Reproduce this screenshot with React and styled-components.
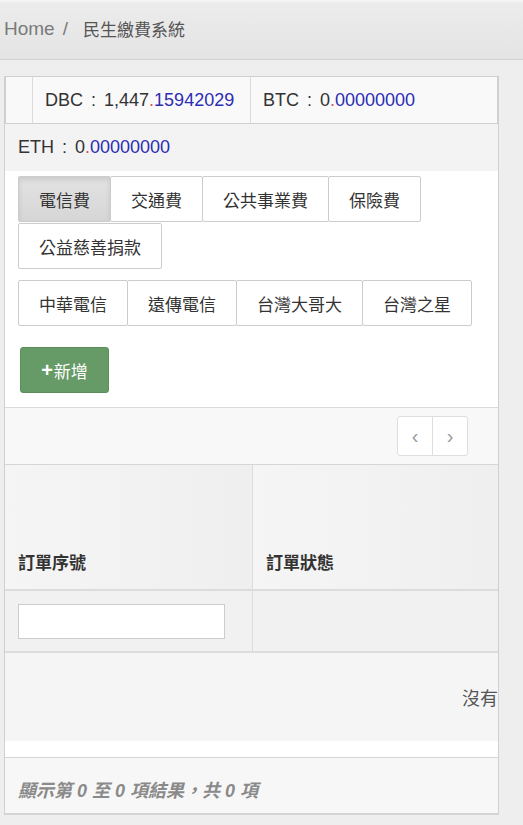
import styled, { createGlobalStyle } from 'styled-components'

const GlobalStyle = createGlobalStyle`
  body {
    margin: 0;
    background: #eeeeee;
    font-family: "Liberation Sans", "Noto Sans CJK TC", sans-serif;
    color: #333;
  }
`

const balances = [
  { coin: 'DBC', whole: '1,447', frac: '15942029' },
  { coin: 'BTC', whole: '0', frac: '00000000' },
]

const categories = ['電信費', '交通費', '公共事業費', '保險費', '公益慈善捐款']
const carriers = ['中華電信', '遠傳電信', '台灣大哥大', '台灣之星']

function Amount({ coin, whole, frac }) {
  return (
    <span>
      {coin}
      <Colon>:</Colon>
      {whole}
      <Dot>.</Dot>
      <Frac>{frac}</Frac>
    </span>
  )
}

function App() {
  return (
    <>
      <GlobalStyle />
      <Breadcrumb>
        <span>Home</span>
        <Sep>/</Sep>
        <Current>民生繳費系統</Current>
      </Breadcrumb>
      <Page>
        <Panel>
          <BalanceTable>
            <EmptyCell />
            <BalanceCell $w={218}>
              <Amount {...balances[0]} />
            </BalanceCell>
            <BalanceCell $last>
              <Amount {...balances[1]} />
            </BalanceCell>
          </BalanceTable>
          <EthRow>
            <Amount coin="ETH" whole="0" frac="00000000" />
          </EthRow>
          <Tools>
            <BtnGroup>
              {categories.map((c, i) => (
                <GroupBtn key={c} $active={i === 0}>
                  {c}
                </GroupBtn>
              ))}
            </BtnGroup>
            <BtnGroup $gapTop={10}>
              {carriers.map((c) => (
                <GroupBtn key={c}>{c}</GroupBtn>
              ))}
            </BtnGroup>
            <AddButton>
              <b>+</b>新增
            </AddButton>
          </Tools>
          <PagerBar>
            <Pager>
              <PagerBtn>‹</PagerBtn>
              <PagerBtn>›</PagerBtn>
            </Pager>
          </PagerBar>
          <Grid>
            <HeadCell>訂單序號</HeadCell>
            <HeadCell $last>訂單狀態</HeadCell>
            <FilterCell>
              <FilterInput />
            </FilterCell>
            <FilterCell $last />
          </Grid>
          <EmptyRow>沒有</EmptyRow>
          <Spacer />
          <Footer>顯示第 0 至 0 項結果，共 0 項</Footer>
        </Panel>
      </Page>
    </>
  )
}

export default App

const Breadcrumb = styled.div`
  height: 60px;
  display: flex;
  align-items: center;
  padding: 0 0 4px 4px;
  background: linear-gradient(#ececec, #e4e4e4);
  border-top: 2px solid #f4f4f4;
  border-bottom: 1px solid #d2d2d2;
  box-sizing: border-box;
  font-size: 19px;
  color: #7a7a7a;
`
const Sep = styled.span`
  margin: 0 15px 0 8px;
`
const Current = styled.span`
  color: #555;
  font-size: 17px;
`
const Page = styled.div`
  padding: 16px 24px 12px 4px;
`
const Panel = styled.div`
  border-left: 1px solid #d0d0d0;
  border-right: 1px solid #d0d0d0;
  border-bottom: 2px solid #d4d4d4;
  background: #f3f3f3;
`
const BalanceTable = styled.div`
  display: flex;
  height: 48px;
  border: 1px solid #cfcfcf;
  background: #f9f9f9;
  box-sizing: border-box;
  font-size: 18px;
`
const EmptyCell = styled.div`
  width: 26px;
  border-right: 1px solid #dcdcdc;
`
const BalanceCell = styled.div`
  display: flex;
  align-items: center;
  padding-left: 12px;
  box-sizing: border-box;
  ${(p) => (p.$w ? `width: ${p.$w}px;` : 'flex: 1;')}
  ${(p) => (p.$last ? '' : 'border-right: 1px solid #dcdcdc;')}
`
const Colon = styled.span`
  margin: 0 8px;
`
const Dot = styled.span`
  color: #d9544f;
`
const Frac = styled.span`
  color: #2d2db4;
`
const EthRow = styled.div`
  height: 47px;
  display: flex;
  align-items: center;
  padding-left: 13px;
  font-size: 18px;
`
const Tools = styled.div`
  background: #fff;
  padding: 5px 0 14px 13px;
  border-bottom: 1px solid #dadada;
`
const BtnGroup = styled.div`
  display: flex;
  flex-wrap: wrap;
  margin-top: ${(p) => p.$gapTop || 0}px;
`
const GroupBtn = styled.div`
  height: 46px;
  padding: 0 20px;
  display: flex;
  align-items: center;
  box-sizing: border-box;
  font-size: 17px;
  color: #333;
  border: 1px solid #cccccc;
  margin-right: -1px;
  margin-bottom: 1px;
  background: ${(p) => (p.$active ? 'linear-gradient(#e2e2e2, #d6d6d6)' : '#fff')};
  box-shadow: ${(p) => (p.$active ? 'inset 0 3px 5px rgba(0,0,0,0.1)' : 'none')};
  border-radius: 2px;
`
const AddButton = styled.div`
  margin-top: 20px;
  margin-left: 2px;
  width: 89px;
  height: 46px;
  display: flex;
  align-items: center;
  justify-content: center;
  box-sizing: border-box;
  border-radius: 3px;
  background: #669a66;
  border: 1px solid #5d8f5d;
  color: #fff;
  font-size: 17px;
  b {
    font-size: 20px;
    margin-right: 1px;
  }
`
const PagerBar = styled.div`
  height: 56px;
  display: flex;
  align-items: center;
  justify-content: flex-end;
  padding-right: 30px;
  background: #f8f8f8;
  border-bottom: 1px solid #d6d6d6;
`
const Pager = styled.div`
  display: flex;
  height: 38px;
  border: 1px solid #dedede;
  border-radius: 3px;
  background: #fff;
`
const PagerBtn = styled.div`
  width: 34px;
  display: flex;
  align-items: center;
  justify-content: center;
  color: #999;
  font-size: 20px;
  & + & {
    border-left: 1px solid #dedede;
  }
`
const Grid = styled.div`
  display: grid;
  grid-template-columns: 248px 1fr;
  grid-template-rows: 126px 62px;
`
const HeadCell = styled.div`
  display: flex;
  align-items: flex-end;
  padding: 0 0 15px 13px;
  font-size: 17px;
  font-weight: bold;
  color: #333;
  background: linear-gradient(90deg, #f5f5f5, #efefef);
  border-bottom: 2px solid #dcdcdc;
  ${(p) => (p.$last ? '' : 'border-right: 1px solid #dcdcdc;')}
`
const FilterCell = styled.div`
  display: flex;
  align-items: center;
  padding-left: 13px;
  background: #f1f1f1;
  border-bottom: 2px solid #dcdcdc;
  ${(p) => (p.$last ? '' : 'border-right: 1px solid #dcdcdc;')}
`
const FilterInput = styled.input`
  width: 207px;
  height: 35px;
  box-sizing: border-box;
  border: 1px solid #cccccc;
  background: #fff;
`
const EmptyRow = styled.div`
  height: 88px;
  display: flex;
  align-items: center;
  justify-content: flex-end;
  background: #f5f5f5;
  font-size: 18px;
  color: #555;
`
const Spacer = styled.div`
  height: 16px;
  background: #fff;
  border-bottom: 1px solid #d4d4d4;
`
const Footer = styled.div`
  height: 55px;
  display: flex;
  align-items: center;
  padding: 6px 0 0 13px;
  box-sizing: border-box;
  background: #f7f7f7;
  font-size: 18px;
  font-style: italic;
  font-weight: bold;
  color: #8a8a8a;
`
